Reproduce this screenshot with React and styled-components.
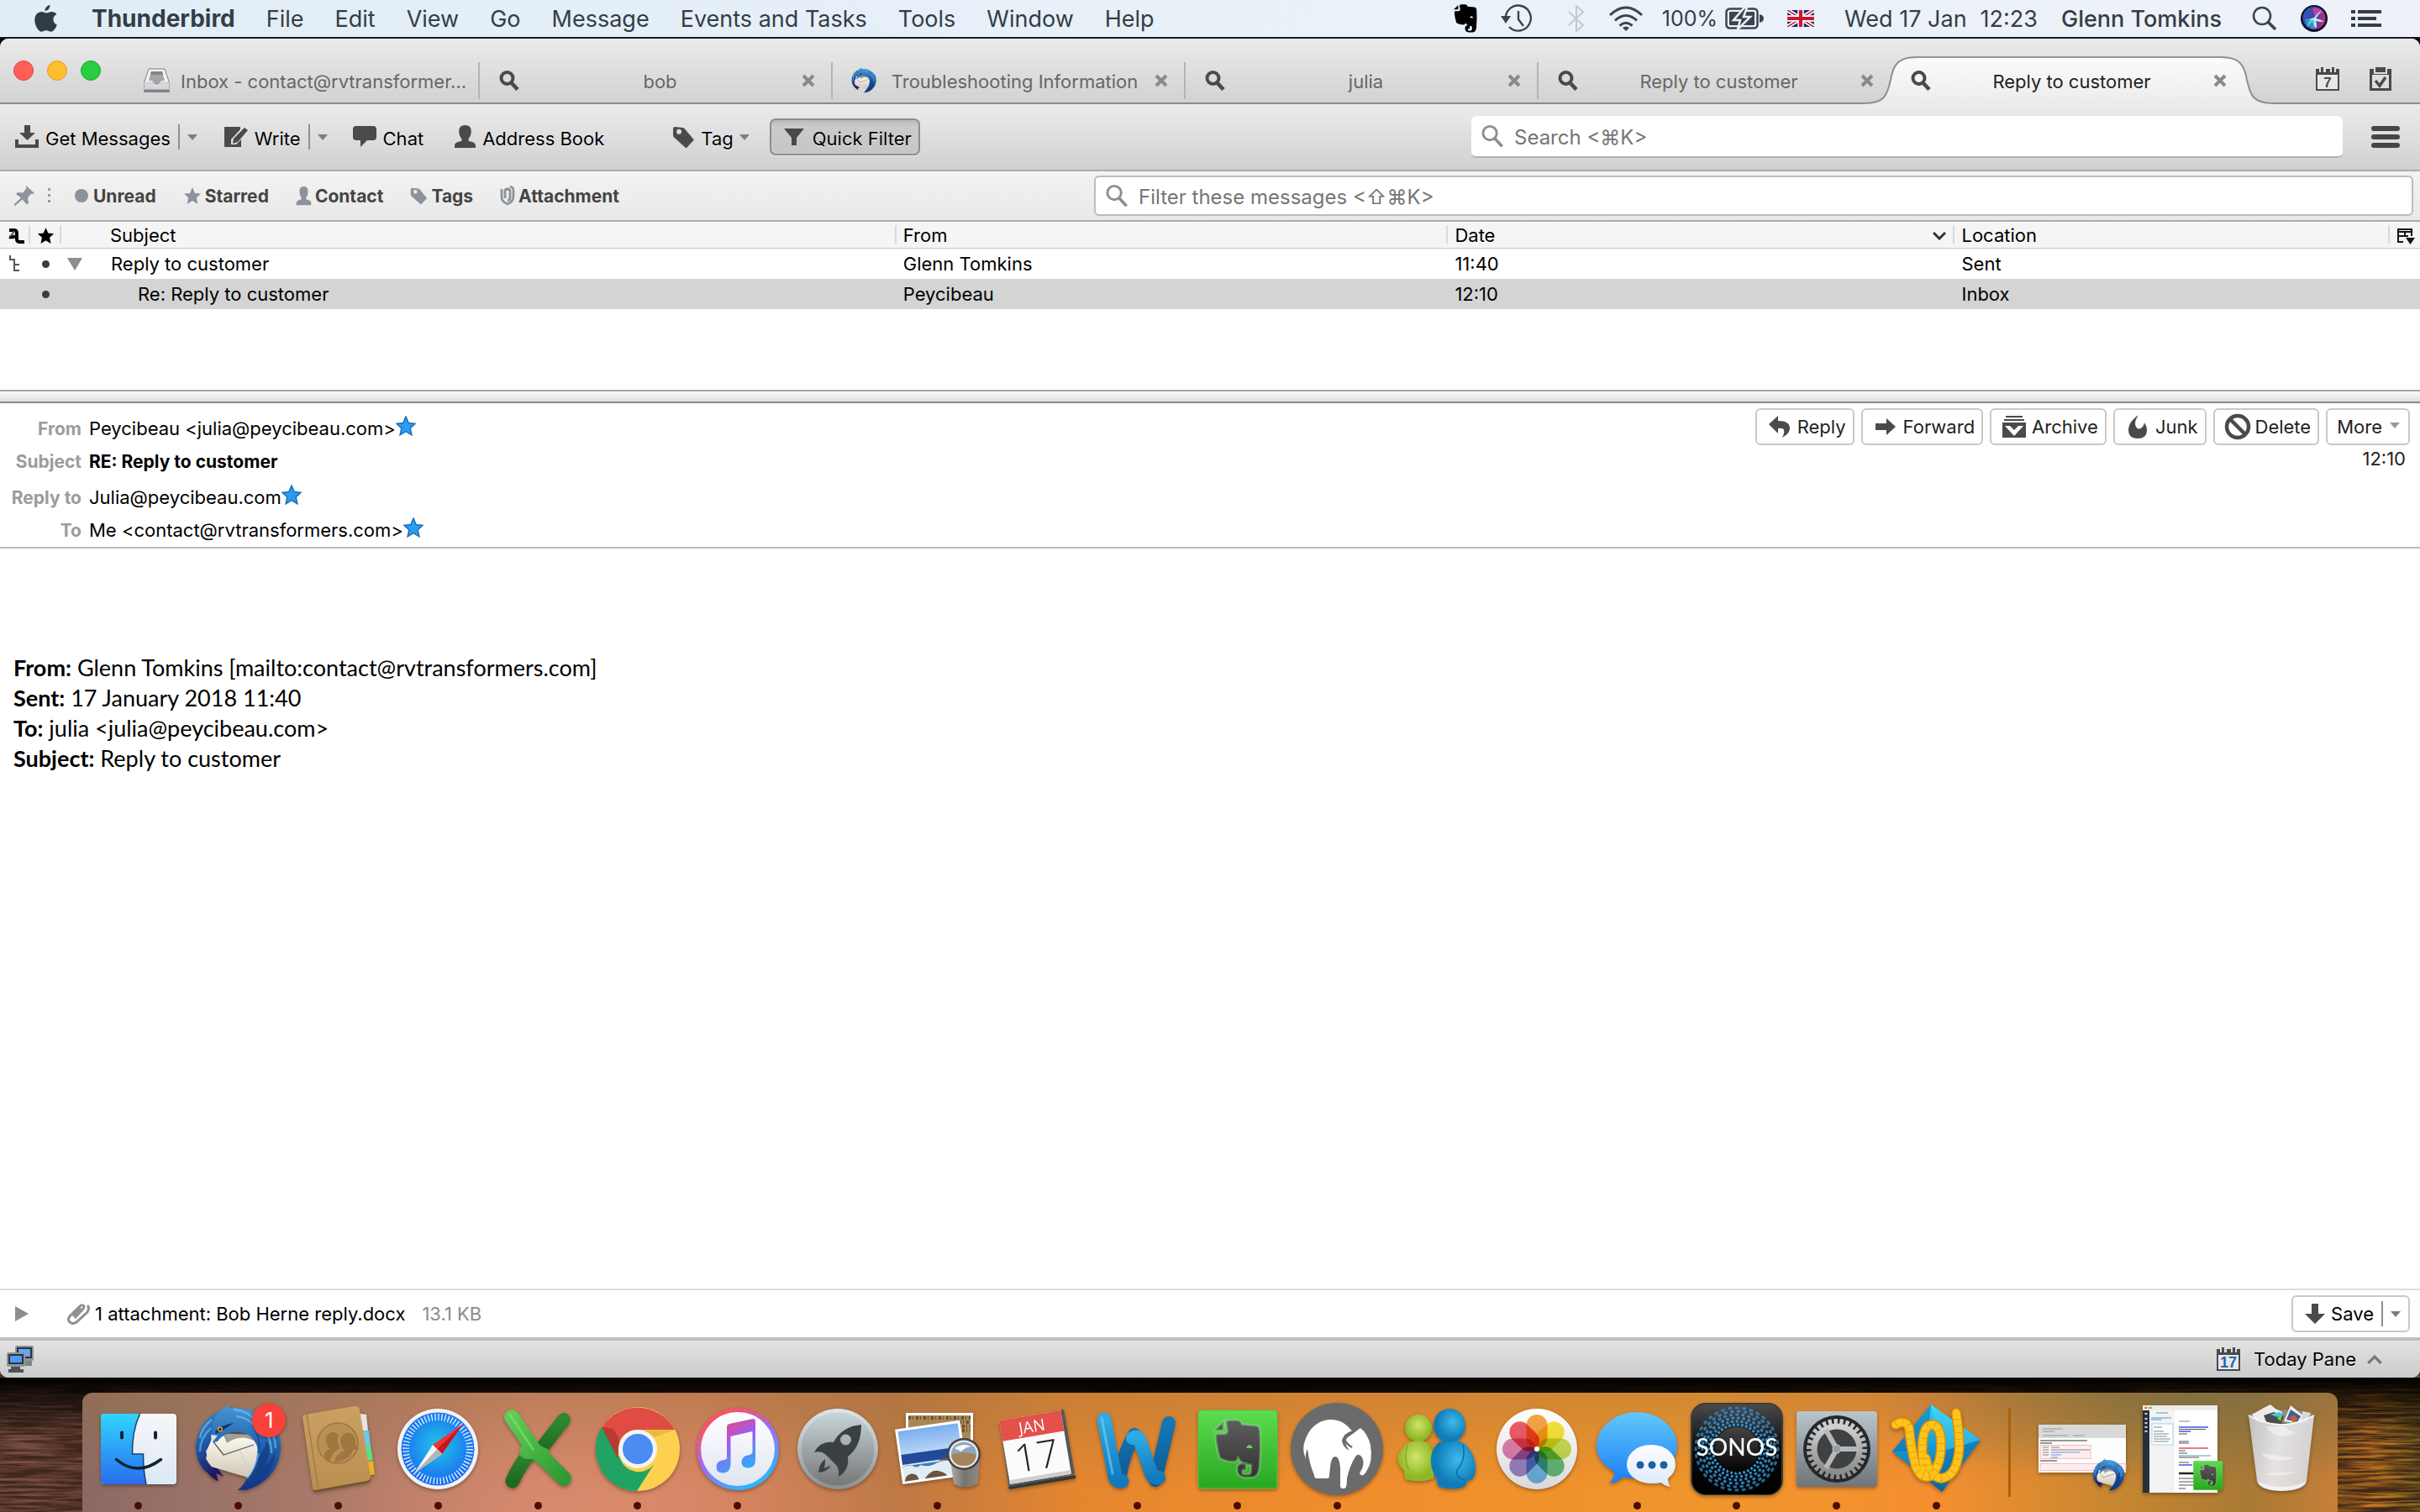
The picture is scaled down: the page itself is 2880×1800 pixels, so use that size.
import React from "react";
import styled, { createGlobalStyle, css } from "styled-components";

const GlobalStyle = createGlobalStyle`
  * { box-sizing: border-box; }
  body {
    margin: 0;
    background: #0b0603;
    color: #000;
    font-family: Inter, "DejaVu Sans", sans-serif;
    font-size: 22px;
  }
  button, input { font: inherit; color: inherit; }
  button { border: 0; padding: 0; background: none; white-space: nowrap; }
  svg { display: block; flex: none; }
`;

const Desktop = styled.div`
  position: relative;
  display: flex;
  flex-direction: column;
  min-height: 100vh;
`;

/* ---------- menu bar ---------- */

const MenuBar = styled.header`
  display: flex;
  justify-content: space-between;
  align-items: center;
  height: 46px;
  padding: 0 46px 0 41px;
  background: linear-gradient(90deg, #e1edf5, #eaf1f9 60%, #eef2f8);
  border-bottom: 2px solid #141c26;
  color: #333d47;
  font-size: 27px;
`;

const MenuList = styled.nav`
  display: flex;
  align-items: center;
  gap: 37px;
`;

const MenuItem = styled.button`
  padding-left: ${(p) => (p.$app ? "4px" : "0")};
  font-size: ${(p) => (p.$app ? "28px" : "27px")};
  font-weight: ${(p) => (p.$app ? 700 : 400)};
`;

const StatusItems = styled.div`
  display: flex;
  align-items: center;
  gap: 28px;
  white-space: nowrap;
`;

const Battery = styled.div`
  display: flex;
  align-items: center;
  gap: 9px;
  margin-left: -6px;
  font-size: 25px;
`;

const Clock = styled.div`
  display: flex;
  gap: 16px;
  margin-left: 8px;
`;

const UserName = styled.span`
  margin-right: 8px;
  font-weight: 500;
`;

/* ---------- window and tabs ---------- */

const Window = styled.main`
  position: relative;
  display: flex;
  flex: 1;
  flex-direction: column;
  border-radius: 10px;
  overflow: hidden;
  background: #fff;
`;

const TabStrip = styled.div`
  display: flex;
  align-items: flex-end;
  height: 78px;
  padding-left: 16px;
  background: linear-gradient(#ebebeb, #d2d2d2);
  border-bottom: 2px solid #8b8b8b;
`;

const WindowButtons = styled.div`
  display: flex;
  align-self: flex-start;
  gap: 16px;
  width: 135px;
  padding-top: 26px;
`;

const WindowButton = styled.button`
  width: 24px;
  height: 24px;
  border-radius: 50%;
  border: 1px solid ${(p) => p.$edge};
  background: ${(p) => p.$fill};
`;

const Tab = styled.div`
  position: relative;
  display: flex;
  align-items: center;
  flex: 0 1 420px;
  min-width: 0;
  height: 52px;
  padding: ${(p) => (p.$first ? "0 6px 0 20px" : "0 20px 0 23px")};
  color: #666;
  text-shadow: 0 1px 0 #eee;
  ${(p) =>
    p.$divider &&
    css`
      &::after {
        content: "";
        position: absolute;
        right: 0;
        top: 4px;
        width: 2px;
        height: 44px;
        background: #b4b4b4;
      }
    `}
`;

const ActiveTab = styled(Tab)`
  height: 57px;
  margin-bottom: -2px;
  color: #222;
`;

const TabTop = styled.div`
  position: absolute;
  top: 0;
  bottom: 0;
  left: 30px;
  right: 28px;
  border-top: 2px solid #979797;
  background: linear-gradient(#fbfbfb, #ececec);
`;

const TabEdge = styled.svg`
  position: absolute;
  top: 0;
  ${(p) => (p.$side === "left" ? "left: -32px;" : "right: -34px; transform: scaleX(-1);")}
`;

const TabTitle = styled.button`
  position: relative;
  flex: 1;
  min-width: 0;
  overflow: hidden;
  padding-top: 2px;
  text-overflow: ellipsis;
  text-align: ${(p) => (p.$left ? "left" : "center")};
  padding-left: ${(p) => (p.$left ? "14px" : "0")};
`;

const IconSlot = styled.span`
  position: relative;
  display: flex;
  justify-content: ${(p) => (p.$end ? "flex-end" : "center")};
  flex: none;
  width: ${(p) => p.$w}px;
`;

const TabTools = styled.div`
  display: flex;
  align-items: center;
  gap: 36px;
  height: 56px;
  margin-left: auto;
  padding-right: 34px;
`;

/* ---------- toolbars ---------- */

const Toolbar = styled.div`
  display: flex;
  align-items: center;
  height: 80px;
  padding: 0 24px 0 17px;
  background: linear-gradient(#ececec, #d0d0d0);
  border-bottom: 2px solid #acacac;
`;

const ToolButton = styled.button`
  display: flex;
  align-items: center;
  gap: 7px;
  height: 44px;
  margin-right: ${(p) => p.$after || 0}px;
  text-shadow: 0 1px 0 #f4f4f4;
  span { padding-top: 3px; }
`;

const ToggleButton = styled(ToolButton)`
  gap: 10px;
  padding: 0 8px 0 15px;
  border: 2px solid #8d8d8d;
  border-radius: 7px;
  background: linear-gradient(#b9b9b9, #cbcbcb 20%, #c6c6c6);
  box-shadow: 0 1px 0 #eee;
`;

const DropButton = styled.button`
  display: flex;
  align-items: center;
  justify-content: center;
  width: 32px;
  height: 30px;
  border-left: 2px solid #8f8f8f;
  margin: 0 ${(p) => p.$after}px 0 9px;
`;

const SearchBox = styled.label`
  display: flex;
  align-items: center;
  gap: 12px;
  flex: 0 1 ${(p) => p.$basis};
  height: ${(p) => (p.$outlined ? "48px" : "50px")};
  margin-left: auto;
  padding: 0 12px 0 11px;
  background: #fff;
  border-radius: 6px;
  ${(p) =>
    p.$outlined
      ? css`border: 2px solid #bcbcbc;`
      : css`border-bottom: 2px solid #b0b0b0;`}
  input {
    flex: 1;
    min-width: 0;
    height: 42px;
    padding: 2px 0 0;
    border: 0;
    outline: 0;
    background: transparent;
    font-size: 24px;
  }
  input::placeholder { color: #757575; opacity: 1; }
`;

const MenuButton = styled.button`
  display: flex;
  flex-direction: column;
  gap: 4px;
  width: 34px;
  margin-left: 34px;
  i {
    height: 6px;
    border-radius: 3px;
    background: #464646;
  }
`;

const FilterBar = styled.div`
  display: flex;
  align-items: center;
  height: 60px;
  padding: 0 8px 0 16px;
  background: linear-gradient(#f3f3f3, #e8e8e8);
  border-bottom: 2px solid #acacac;
`;

const FilterButton = styled.button`
  display: flex;
  align-items: center;
  gap: 4px;
  margin-right: 32px;
  color: #444;
  font-size: 21px;
  font-weight: 700;
`;

const Dots = styled.i`
  width: 3px;
  height: 18px;
  margin: 0 28px 0 15px;
  background: repeating-linear-gradient(#999 0 3px, transparent 3px 7px);
`;

/* ---------- message list ---------- */

const ThreadPane = styled.section`
  height: 200px;
`;

const ThreadTable = styled.table`
  width: 100%;
  table-layout: fixed;
  border-collapse: separate;
  border-spacing: 0;
  text-align: left;
`;

const HeadCell = styled.th`
  position: relative;
  height: 32px;
  padding: 2px 0 0 ${(p) => p.$pad ?? 8}px;
  background: #f5f5f5;
  border-bottom: 1px solid #c4c4c4;
  font-weight: 400;
  line-height: 29px;
  &:not(:last-child)::after {
    content: "";
    position: absolute;
    right: 0;
    top: 4px;
    width: 2px;
    height: 22px;
    background: #d9d9d9;
  }
`;

const HeadLabel = styled.span`
  display: flex;
  justify-content: ${(p) => (p.$center ? "center" : "space-between")};
  align-items: center;
  padding-right: ${(p) => (p.$center ? 0 : 10)}px;
`;

const Row = styled.tr`
  height: 36px;
  background: ${(p) => (p.$selected ? "#d4d4d4" : "#fff")};
`;

const Cell = styled.td`
  height: 36px;
  padding: 0 0 0 ${(p) => p.$pad ?? 8}px;
  line-height: 36px;
  white-space: nowrap;
`;

const SubjectCell = styled.span`
  display: flex;
  align-items: center;
  gap: 34px;
`;

const ReadDot = styled.i`
  display: block;
  width: 9px;
  height: 9px;
  margin: 0 auto;
  border-radius: 50%;
  background: #3c3c3c;
`;

const Splitter = styled.div`
  height: 16px;
  background: linear-gradient(#fafafa, #dedede);
  border-top: 2px solid #a6a6a6;
  border-bottom: 2px solid #8b8b8b;
`;

/* ---------- message ---------- */

const MessageHeader = styled.section`
  display: flex;
  justify-content: space-between;
  border-bottom: 2px solid #bcbcbc;
`;

const Fields = styled.dl`
  margin: 0;
  padding-top: 11px;
`;

const Field = styled.div`
  display: flex;
  height: 39px;
  margin-top: ${(p) => (p.$spaced ? 4 : 0)}px;
  line-height: 39px;
  dt {
    width: 97px;
    color: #9c9c9c;
    font-size: 21px;
    font-weight: 700;
    text-align: right;
  }
  dd {
    display: flex;
    margin: 0 0 0 9px;
    font-size: ${(p) => (p.$strong ? 21 : 22)}px;
    font-weight: ${(p) => (p.$strong ? 700 : 400)};
  }
  svg { margin-top: 4px; }
`;

const HeaderSide = styled.div`
  color: #222;
  text-align: right;
`;

const HeaderButtons = styled.div`
  display: flex;
  gap: 8px;
  padding: 6px 12px 0 0;
`;

const BoxButton = styled.button`
  display: flex;
  align-items: center;
  height: 44px;
  padding: 0 8px 0 ${(p) => p.$pad ?? 6}px;
  border: 2px solid #c9c9c9;
  border-radius: 6px;
  background: #fff;
`;

const MoreArrow = styled.span`
  padding: 0 2px 4px 9px;
`;

const MessageTime = styled.div`
  padding-right: 17px;
  line-height: 32px;
`;

const MessageBody = styled.article`
  flex: 1;
  padding: 124px 16px 0;
  font-family: Lato, "Liberation Sans", sans-serif;
  font-size: 27px;
  line-height: 36px;
  p { margin: 0; }
`;

const AttachmentBar = styled.section`
  display: flex;
  align-items: center;
  height: 58px;
  padding: 0 12px 0 18px;
  border-top: 2px solid #dedede;
`;

const AttachmentText = styled.span`
  margin-left: 6px;
`;

const AttachmentSize = styled.span`
  margin-left: 20px;
  color: #8b8b85;
`;

const ClipSlot = styled.span`
  margin-left: 45px;
`;

const SaveGroup = styled.div`
  display: flex;
  align-items: center;
  height: 44px;
  margin-left: auto;
  padding: 0 0 0 14px;
  border: 2px solid #c9c9c9;
  border-radius: 6px;
`;

const StatusBar = styled.footer`
  display: flex;
  justify-content: space-between;
  align-items: center;
  height: 48px;
  padding: 0 45px 0 8px;
  border-top: 4px solid #bfbfbf;
  background: linear-gradient(#e2e2e2, #cbcbcb);
`;

const TodayButton = styled(ToolButton)`
  gap: 13px;
  span { padding: 0; }
  svg:first-child { margin-right: 3px; }
`;

/* ---------- dock ---------- */

const Wallpaper = styled.svg`
  position: absolute;
  left: 0;
  bottom: 0;
  width: 100%;
  height: 220px;
`;

const DockArea = styled.div`
  position: relative;
  height: 160px;
  padding: 18px 98px 0;
  background: linear-gradient(#000 0, #000000b0 20px, transparent 70px);
`;

const DockShelf = styled.nav`
  display: flex;
  height: 142px;
  padding: 0 7px;
  border-radius: 12px 12px 0 0;
  background:
    radial-gradient(340px 150px at 24% 100%, #e0907399, transparent),
    radial-gradient(380px 110px at 93% 0, #786b42cc, transparent),
    linear-gradient(#9c744060, transparent 80%),
    linear-gradient(90deg, #8b6a64, #a8796a 10%, #cf8468 20%, #cf7f58 28%, #bd7844 36%, #e5862f 44%, #f08d2c 56%, #f0962b 72%, #f58f30 82%, #c98730 90%, #a97a35 96%, #c67f38);
`;

const DockItem = styled.button`
  position: relative;
  display: flex;
  flex-direction: column;
  align-items: center;
  flex: 1;
  padding-top: 12px;
  &::after {
    content: "";
    display: ${(p) => (p.$running ? "block" : "none")};
    width: 9px;
    height: 9px;
    margin-top: 8px;
    border-radius: 50%;
    background: #4c0d00;
  }
  svg { overflow: visible; filter: drop-shadow(0 2px 2px #0005); }
`;

const DockDivider = styled.i`
  width: 54px;
  margin: 18px 0;
  background: linear-gradient(#a8620f, #a8620f) center / 3px 100% no-repeat;
`;

const Badge = styled.span`
  position: absolute;
  top: 13px;
  left: calc(50% + 17px);
  width: 40px;
  height: 40px;
  border-radius: 50%;
  background: #fa4038;
  box-shadow: 0 1px 4px #0006;
  color: #fff;
  font-size: 26px;
  line-height: 40px;
`;

/* ---------- small icons ---------- */

const DARK = "#4a4a4a";
const STAR = "M11 0l3.2 7.6 7.8.8-5.8 5.3 1.7 8.1L11 17.6l-6.9 4.2 1.7-8.1L0 8.4l7.8-.8z";
const EVERNOTE =
  "M28 33l11-11v9q0 2-2 2zM42 24q0-3 4-3.500h10q4 .5 5 5l16 1.500q5 .5 5.500 6 1.500 20-.5 44-1 11-9 12h-9q-9-1-9-10 0-7 6-7h5v8h-2.500q-2 0-2 2.500t3 2.500h4q3 0 3-5v-6q-11 0-15-8-1 4-5 4.500-8 0-17-4.500-4-14-5-26 0-3 3-3h7q4 0 4-4z";

const Apple = () => (
  <svg width="27" height="32" viewBox="0 0 27 32" fill="#313b46">
    <path d="M18.500 0c.3 3.500-2.700 7-6 6.900C12.200 3.600 15.200.5 18.500 0zM22.400 17c0-3.200 2-4.900 4-6-1.500-2.200-3.900-3-5.800-3-2.700 0-4.500 1.600-6.200 1.600S10.800 8.100 8.400 8.100C4.200 8.100.3 11.600.3 18c0 6.600 4.600 13.800 8 13.800 2 0 3.200-1.500 5.700-1.500s3.400 1.500 5.600 1.500c3.200 0 6-4.800 7.200-8.300-2.600-1-4.400-3.300-4.400-6.500z" />
  </svg>
);

const Elephant = ({ w = 29, h = 34 }) => (
  <svg width={w} height={h} viewBox="26 20 58 70" preserveAspectRatio="none">
    <path d={EVERNOTE} fill="#000" />
    <path d="M66 53q4-8 9 1z" fill="#eaf1f9" />
  </svg>
);

const TimeMachine = () => (
  <svg width="38" height="34" viewBox="0 0 38 34" fill="none" stroke="#3b444e" strokeWidth="2.400">
    <path d="M6 19A15 15 0 1 1 10 27" />
    <path d="M21 8v10l6 8" />
    <path d="M0 14h12l-6 9z" fill="#3b444e" stroke="none" />
  </svg>
);

const Bluetooth = () => (
  <svg width="20" height="32" viewBox="0 0 20 32" fill="none" stroke="#c3c9d1" strokeWidth="2">
    <path d="M1 8l17 16-8 7V1l8 7L1 24" />
  </svg>
);

const Wifi = () => (
  <svg width="42" height="30" viewBox="0 0 42 30" fill="none" stroke="#3b444e" strokeWidth="3">
    <path d="M2 11q19-18 38 0M8 17.500q13-12 26 0M13.500 23.500q7.500-6.500 15 0" />
    <path d="M17 26q4-3 8 0l-4 4z" fill="#3b444e" stroke="none" />
  </svg>
);

const BatteryIcon = () => (
  <svg width="46" height="26" viewBox="0 0 46 26">
    <rect x="1.500" y="1.500" width="37" height="23" rx="4" fill="none" stroke="#3b444e" strokeWidth="2.500" />
    <rect x="5" y="5" width="30" height="16" rx="1" fill="#3b444e" />
    <path d="M41 8q5 1 5 5t-5 5z" fill="#3b444e" />
    <path d="M23 0L10 15h8l-3 11L30 11h-8l4-11z" fill="#3b444e" stroke="#eaf1f9" strokeWidth="2.500" />
  </svg>
);

const Flag = () => (
  <svg width="32" height="20" viewBox="0 0 60 38">
    <rect width="60" height="38" fill="#1d2a78" />
    <path d="M0 0l60 38M60 0L0 38" stroke="#fff" strokeWidth="9" />
    <path d="M0 0l60 38M60 0L0 38" stroke="#cc1430" strokeWidth="3" />
    <path d="M30 0v38M0 19h60" stroke="#fff" strokeWidth="14" />
    <path d="M30 0v38M0 19h60" stroke="#cc1430" strokeWidth="8" />
  </svg>
);

const Spotlight = () => (
  <svg width="30" height="30" viewBox="0 0 30 30" fill="none" stroke="#3b444e" strokeWidth="2.600">
    <circle cx="12" cy="12" r="10" />
    <path d="M19 19l9 9" strokeWidth="3.500" />
  </svg>
);

const Siri = () => (
  <svg width="32" height="32" viewBox="0 0 32 32">
    <defs>
      <linearGradient id="siri" x1="0" y1="0.300" x2="1" y2="0.700">
        <stop offset="0" stopColor="#1f5fc0" />
        <stop offset="0.500" stopColor="#4c3f9c" />
        <stop offset="0.900" stopColor="#b02f86" />
      </linearGradient>
    </defs>
    <circle cx="16" cy="16" r="16" fill="#10102c" />
    <circle cx="16" cy="15.500" r="13.500" fill="url(#siri)" />
    <path d="M14 4q8-3 13 6-6 0-10 4z" fill="#d445a8" opacity=".8" />
    <path d="M4 18q10-2 12-3 5-6 9-9-4 6-7 10 6 1 10 4-6 0-10-1 2 6 0 9-3-3-4-9-3 4-7 7 2-5 5-9-4 1-8 1z" fill="#b4f4fb" />
    <path d="M5 19q4 9 11 10 1-7 0-12z" fill="#20c6d8" opacity=".6" />
  </svg>
);

const ListIcon = () => (
  <svg width="36" height="20" viewBox="0 0 36 20" fill="#333d47">
    <path d="M0 0h5v4H0zM8 0h28v4H8zM0 8h5v4H0zM8 8h22v4H8zM0 16h5v4H0zM8 16h28v4H8z" />
  </svg>
);

const Lens = ({ size = 24, color = DARK, w = 4 }) => (
  <svg width={size} height={size} viewBox="0 0 24 24" fill="none" stroke={color} strokeWidth={w}>
    <circle cx="9.500" cy="9" r="7" />
    <path d="M14 14l8 8.500" strokeWidth={w + 0.6} />
  </svg>
);

const Inbox = () => (
  <svg width="31" height="30" viewBox="0 0 31 30">
    <path d="M6 1h19l5 15v9H1v-9z" fill="#f3f3f5" stroke="#7d7d7d" />
    <path d="M9 4h13l3 11h-4q-2 5-5.500 5T10 15H6z" fill="#a6a6a6" />
    <path d="M9 4h13l1 4H8z" fill="#858585" />
    <path d="M1 16h9q2 5 5.500 5t5.500-5h9v9H1z" fill="#d6d7de" />
    <path d="M0 26h31v3H0z" fill="#848484" />
  </svg>
);

const Cross = () => (
  <svg width="16" height="16" viewBox="0 0 16 16" stroke="#8a8a8a" strokeWidth="4">
    <path d="M2 2l12 12M14 2L2 14" />
  </svg>
);

const CalendarIcon = ({ day, color = DARK, size = 17 }) => (
  <svg width="28" height="28" viewBox="0 0 28 28">
    <path d="M0 2h4v4h2V0h3v6h3V2h5v4h2V0h3v6h2V2h4v26H0z" fill={DARK} />
    <path d="M2 9h24v17H2z" fill="#e8e8e8" />
    <text x="14" y="24" textAnchor="middle" fontFamily="Liberation Sans, sans-serif" fontWeight="700" fontSize={size} fill={color}>{day}</text>
  </svg>
);

const TasksIcon = () => (
  <svg width="26" height="28" viewBox="0 0 26 28">
    <path d="M0 2h5v6h16V2h5v26H0z" fill={DARK} />
    <path d="M7 0h12v6H7z" fill={DARK} />
    <path d="M3 9h20v16H3z" fill="#dedede" />
    <path d="M7 16l5 6 7-10" fill="none" stroke={DARK} strokeWidth="3.500" />
  </svg>
);

const Arrow = ({ color = "#7d7d7d" }) => (
  <svg width="12" height="7" viewBox="0 0 12 7"><path d="M0 0h12L6 7z" fill={color} /></svg>
);

const GetMail = () => (
  <svg width="30" height="28" viewBox="0 0 30 28" fill={DARK}>
    <path d="M12 0h7v9h6l-9.500 9L6 9h6z" />
    <path d="M1 17h4v6h20v-6h4v10H1z" />
  </svg>
);

const WriteIcon = () => (
  <svg width="30" height="26" viewBox="0 0 30 26" fill={DARK}>
    <path d="M1 1h19v3L9 16v6h6l6-6v9H1z" />
    <path d="M25 2l4 3-12 14-6 2 1-6z" />
  </svg>
);

const ChatIcon = () => (
  <svg width="30" height="28" viewBox="0 0 30 28" fill={DARK}>
    <path d="M5 1h20q4 0 4 4v9q0 4-4 4h-7l-8 8v-8H5q-4 0-4-4V5q0-4 4-4z" />
  </svg>
);

const Person = ({ w = 26, h = 28, color = DARK }) => (
  <svg width={w} height={h} viewBox="0 0 26 28" fill={color} preserveAspectRatio="none">
    <path d="M13 0q7 0 7 7 0 6-3 9v3q8 1 8 5v3H1v-3q0-4 8-5v-3Q6 13 6 7q0-7 7-7z" />
  </svg>
);

const TagIcon = ({ w = 26, color = DARK }) => (
  <svg width={w} height={w} viewBox="0 0 26 26">
    <path fillRule="evenodd" d="M1 3q0-2 2-2l9 1q2 0 3 2l10 12-9 9.500L2 13Q1 12 1 10zM5 6.500a2.800 2.800 0 1 0 5.600 0 2.800 2.800 0 1 0-5.600 0z" fill={color} />
  </svg>
);

const Funnel = () => (
  <svg width="24" height="22" viewBox="0 0 24 22"><path d="M0 1h24l-9 11v9h-6v-9z" fill={DARK} /></svg>
);

const Pin = () => (
  <svg width="26" height="26" viewBox="0 0 26 26" fill="#8c939c">
    <path d="M15 1l10 9-3 1-1-.5-4 5 1 6-2 2-5.500-6L2 25H1v-2l8-7.500L3 11l2-2 6 .5 4.500-5L15 3z" />
  </svg>
);

const Clip = () => (
  <svg width="18" height="24" viewBox="0 0 18 24" fill="none" stroke="#8c939c" strokeWidth="2.800">
    <path d="M6 15V7q0-3 3-3t3 3v7q0 3-3 4M2 4v10q0 5 7 8 7-3 7-9V6q0-4-4-5" />
  </svg>
);

const Star = ({ size = 22, fill = "#8c939c", stroke }) => (
  <svg width={size} height={size} viewBox="-1 -1 24 24"><path d={STAR} fill={fill} stroke={stroke} strokeWidth="1.500" /></svg>
);

const ThreadHead = () => (
  <svg width="20" height="20" viewBox="0 0 20 20" fill="none" stroke="#000" strokeWidth="4">
    <path d="M1 3h6q3 0 3 4v7q0 3 4 3h5M1 11q4 1 7-1" />
    <path d="M2 11l5-7" stroke="#555" strokeWidth="2" />
  </svg>
);

const ThreadMark = () => (
  <svg width="12" height="20" viewBox="0 0 12 20" fill="none" stroke="#555" strokeWidth="2">
    <path d="M1 0v5h5v13h6M6 11h6" />
  </svg>
);

const Picker = () => (
  <svg width="22" height="20" viewBox="0 0 22 20">
    <path d="M8 17H2V2h16v8M2 5h16M10 4v6M2 10h12" fill="none" stroke="#111" strokeWidth="2" />
    <path d="M11 12h11l-5.500 8z" fill="#111" />
  </svg>
);

const ReplyIcon = () => (
  <svg width="26" height="26" viewBox="0 0 26 26" fill={DARK}><path d="M0 10L11 0v6q14 0 14 9 0 6-9 11 3-5 2-9-1-3-7-2v6z" /></svg>
);
const ForwardIcon = () => (
  <svg width="24" height="20" viewBox="0 0 24 20" fill={DARK}><path d="M0 6h13V0l11 10-11 10v-6H0z" /></svg>
);
const ArchiveIcon = () => (
  <svg width="28" height="26" viewBox="0 0 28 26">
    <path d="M4 0h20v2H4zM2 4h24v2H2zM0 8h28v18H0z" fill={DARK} />
    <path d="M3 12h6l5 5 5-5h6L14 24z" fill="#fff" />
  </svg>
);
const JunkIcon = () => (
  <svg width="22" height="28" viewBox="0 0 22 28" fill={DARK}><path d="M12 0Q6 9 9 14q3 5 8 0 2-3 2-5 3 5 3 9 0 10-11 10T0 18Q0 8 12 0z" /></svg>
);
const DeleteIcon = () => (
  <svg width="32" height="32" viewBox="0 0 32 32" fill="none" stroke={DARK} strokeWidth="4.500">
    <circle cx="16" cy="16" r="13" />
    <path d="M7 7l18 18" />
  </svg>
);
const SaveIcon = () => (
  <svg width="24" height="24" viewBox="0 0 24 24" fill={DARK}><path d="M8 0h8v12h8L12 24 0 12h8z" /></svg>
);

const PaperClip = () => (
  <svg width="28" height="26" viewBox="0 0 28 26" fill="none" stroke="#8f8f8f" strokeWidth="3">
    <path d="M10 18L20 7q2-3 0-4t-4 1L4 16q-3 4 0 7t8 0L25 11q3-5 0-8" />
    <path d="M8 16l9-10" />
  </svg>
);

const Computers = () => (
  <svg width="34" height="34" viewBox="0 0 34 34">
    <rect x="10" y="1" width="22" height="18" rx="2" fill="#8c9699" />
    <rect x="12" y="3" width="18" height="13" fill="#2c3338" />
    <rect x="14" y="5" width="14" height="9" fill="#62a6f8" />
    <path d="M20 19h10v6h-8z" fill="#7b8588" />
    <rect x="0" y="9" width="22" height="17" rx="2" fill="#8c9699" />
    <rect x="2" y="11" width="18" height="12" fill="#2c3338" />
    <rect x="4" y="13" width="14" height="8" fill="#4c9af8" />
    <path d="M5 26h11v3h4v4H2v-4h3z" fill="#4b5356" />
  </svg>
);

const Chevron = ({ up, w = 16, color = "#333" }) => (
  <svg width={w} height={w / 2 + 2} viewBox="0 0 16 10" fill="none" stroke={color} strokeWidth="3">
    <path d={up ? "M1 9l7-7 7 7" : "M1 1l7 7 7-7"} />
  </svg>
);

/* ---------- dock icons ---------- */

const Art = ({ children, size = 110 }) => (
  <svg width={size} height={size} viewBox="0 0 110 110">{children}</svg>
);

const Grad = ({ id, from, to, mid, x2 = 0, y2 = 1 }) => (
  <linearGradient id={id} x1="0" y1="0" x2={x2} y2={y2}>
    <stop offset="0" stopColor={from} />
    {mid && <stop offset=".5" stopColor={mid} />}
    <stop offset="1" stopColor={to} />
  </linearGradient>
);

const Finder = () => (
  <Art>
    <defs>
      <Grad id="fL" from="#2fd6ff" to="#2a6cee" />
      <Grad id="fR" from="#f8f6f8" to="#dbe8f6" />
    </defs>
    <rect x="11" y="13" width="90" height="84" rx="4" fill="url(#fR)" />
    <path d="M15 13h42.500Q48 34 48.500 61h13q0 20 3.500 36H15q-4 0-4-4V17q0-4 4-4z" fill="url(#fL)" />
    <path d="M57.500 13Q48 34 48.500 61h13q0 20 3.500 36" fill="none" stroke="#17406b" strokeWidth="1.500" />
    <path d="M36 35.500v6M76 35.500v6" stroke="#10222f" strokeWidth="4" strokeLinecap="round" />
    <path d="M29.500 67.500q25 21 53 0" fill="none" stroke="#10222f" strokeWidth="3.500" strokeLinecap="round" />
  </Art>
);

const BirdShapes = () => (
  <>
    <defs>
      <Grad id="bird" from="#3f97d6" mid="#1d59a8" to="#1c1560" x2={0.3} />
      <Grad id="wing" from="#4799d4" mid="#1f62b0" to="#12357e" />
      <Grad id="mail" from="#fffdf6" to="#cfc5b5" />
    </defs>
    <path d="M14 74q6 14 17 19l-4-11 11 6-9-13z" fill="#241363" />
    <path d="M20 36l54 2 12 24-15 28L13 73z" fill="url(#mail)" />
    <path d="M36 34q16-6 36 0l4 12q-18-10-34 2z" fill="#4a4640" opacity=".5" />
    <path d="M21 40l17 22 36-12" fill="none" stroke="#5d564c" strokeWidth="1.300" />
    <path d="M57 56l16 32" stroke="#d5cbb9" strokeWidth="1" />
    <path d="M32 10Q6 24 5 54q1 16 10 26l17 14-3-10 10 3Q22 78 17 66q2-4 0-8 6-10 10-26z" fill="url(#bird)" />
    <path d="M24 44Q22 22 33 10q6-4 12-9l-1 5q26-2 40 10 23 14 22 38-2 29-27 44-10 6-24 6 7-6 11-14 10-10 12-28 3-12-8-22-10-7-22-5-13 4-17 11l-6 1z" fill="url(#wing)" />
    <path d="M76 34q9 13 3 29 8-6 10-18 8 12-2 30 9-6 12-18 2 16-15 34-11 11-22 14 13-15 17-34 4-18-3-37z" fill="#143b86" opacity=".75" />
    <path d="M50 8q18 2 26 13M53 16q15 2 20 10M83 28q12 12 12 32M90 28q10 12 10 26M10 42q2-12 14-22M10 58q0-16 13-28M80 60q-4 16-14 30" fill="none" stroke="#8ed0f2" strokeWidth="2.500" opacity=".5" />
    <path d="M28 34q8-8 22-10-12 9-21 13z" fill="#12336f" />
    <circle cx="34" cy="31.500" r="3" fill="#f29a22" />
    <circle cx="34" cy="31.500" r="1.500" fill="#111" />
    <path d="M23 38l8 1-7 9z" fill="#dfe3e8" />
  </>
);

const Bird = ({ size }) => <Art size={size}><BirdShapes /></Art>;

const Contacts = () => (
  <Art>
    <defs><Grad id="book" from="#cba163" to="#b98e50" /></defs>
    <path d="M81 13l8 1 2 19-8 1z" fill="#e4e4e4" />
    <path d="M84 34l8-1 2 18-8 2z" fill="#6cc9e8" />
    <path d="M86 52l8-1 3 17-9 2z" fill="#5dde84" />
    <path d="M88 70l9-1 2 16-8 2z" fill="#f0ae22" />
    <path d="M27 106l63-11q5-2 4-7l-66 12z" fill="#6f5126" />
    <path d="M13 17q0-3 3-3l58-10q6-1 7 4l13 80q0 4-4 5l-62 11q-3 0-3-3z" fill="url(#book)" />
    <path d="M18 13l14 91" stroke="#a57c3f" strokeWidth="1.500" />
    <circle cx="55" cy="48" r="24" fill="#b88f54" stroke="#9d7640" strokeWidth="1.500" />
    <path d="M39 62q0-5 7-7-6-6-5-13 2-7 9-7 5 1 6 4-3 8 2 15-10 4-13 17-5-4-6-9zM51 71q1-10 12-14-7-8-4-16 3-6 10-5 8 2 7 13l4 6-7 1q-3 12-22 15z" fill="#9d7640" />
  </Art>
);

const Safari = () => (
  <Art>
    <defs>
      <radialGradient id="saf" cx=".5" cy=".45">
        <stop offset="0" stopColor="#21c8e6" />
        <stop offset="1" stopColor="#1a6ff2" />
      </radialGradient>
    </defs>
    <circle cx="55" cy="55" r="48" fill="#f2f2f2" />
    <circle cx="55" cy="55" r="43.500" fill="url(#saf)" />
    <circle cx="55" cy="55" r="38" fill="none" stroke="#e6f4ff" strokeWidth="8" strokeDasharray="1.300 2.680" />
    <path d="M85 25L60 61 49 50z" fill="#f5303a" />
    <path d="M85 25L60 61l-5.500-6z" fill="#c8151d" />
    <path d="M27 84l22-34 11 11z" fill="#f6f6f6" />
    <path d="M27 84l27.500-29L60 61z" fill="#b4b4b4" />
  </Art>
);

const Excel = () => (
  <Art>
    <defs>
      <Grad id="xl" from="#5fcb52" to="#2f9a34" x2={1} />
      <Grad id="xd" from="#2e8a2d" to="#1f6a22" />
    </defs>
    <path d="M86 20L58 56" stroke="url(#xd)" strokeWidth="16" strokeLinecap="round" />
    <path d="M25 93Q34 72 48 58" stroke="url(#xd)" strokeWidth="17" strokeLinecap="round" fill="none" />
    <path d="M24 17l27 40q4 5 10 5M42 58h8q6 0 10 6l26 26" stroke="url(#xl)" strokeWidth="18" strokeLinecap="round" fill="none" />
    <path d="M22 14l27 41" stroke="#86e274" strokeWidth="3" strokeLinecap="round" opacity=".6" />
  </Art>
);

const Chrome = () => (
  <Art>
    <circle cx="55" cy="55" r="50" fill="#fdd04f" />
    <path d="M12 30A50 50 0 0 1 99 32H55a23 23 0 0 0-21 13z" fill="#de4c43" />
    <path d="M12 29A50 50 0 0 0 54 105l21-33a23 23 0 0 1-41-6z" fill="#21a363" />
    <path d="M55 32h44l-24 9z" fill="#d9a32c" opacity=".5" />
    <path d="M12 29l19 37 3-20-8-15z" fill="#b73b33" />
    <circle cx="55" cy="55" r="23" fill="#f4f4f4" />
    <circle cx="55" cy="55" r="18" fill="#4a8cf2" />
  </Art>
);

const ITunes = () => (
  <Art>
    <defs>
      <linearGradient id="itr" x1="0" y1="0" x2=".6" y2="1">
        <stop offset="0" stopColor="#ff4f5e" />
        <stop offset=".25" stopColor="#f2556e" />
        <stop offset=".55" stopColor="#a36af0" />
        <stop offset="1" stopColor="#2bb6ff" />
      </linearGradient>
      <Grad id="itb" from="#ffffff" to="#dfe5f0" />
      <Grad id="itn" from="#fb4757" mid="#a259f2" to="#3aa5f8" x2={0.4} />
    </defs>
    <circle cx="55" cy="55" r="49" fill="url(#itr)" />
    <circle cx="55" cy="55" r="44" fill="url(#itb)" />
    <path d="M42 29q0-3 3-4l28-6q3 0 3 3v46q0 9-8 9.500T59.500 71q0-7 7-8.500 6-1 6-4V34l-26 6v33q0 10-9 10.500-8 0-8-7 0-7 7-8t5.500-4z" fill="url(#itn)" />
  </Art>
);

const Launchpad = () => (
  <Art>
    <defs>
      <Grad id="lpa" from="#dbe7ea" to="#8b8f90" />
      <Grad id="lpb" from="#c8d6da" to="#777" />
    </defs>
    <circle cx="55" cy="55" r="48" fill="url(#lpa)" />
    <circle cx="55" cy="55" r="43.500" fill="url(#lpb)" />
    <path fillRule="evenodd" d="M83 26Q60 28 50 47q-16-2-23 12 8-2 13 2l13 13q4 4 3 14 13-8 11-24 16-12 16-38zM58 44a6.500 6.500 0 1 0 13 0 6.500 6.500 0 1 0-13 0z" fill="#3b4044" />
    <path d="M40 67q-7 5-8 16 10-1 15-8-4 1-8 3 1-5 1-11z" fill="#3b4044" />
  </Art>
);

const Preview = () => (
  <Art>
    <defs>
      <Grad id="sky" from="#7aaef0" to="#bcd7f6" />
      <Grad id="cyl" from="#b4b0aa" mid="#77736f" to="#8f8b87" x2={1} y2={0} />
    </defs>
    <rect x="17" y="12" width="80" height="60" fill="#fff" />
    <rect x="20" y="15" width="74" height="54" fill="#a98754" />
    <path d="M20 18h74M80 23h14M84 28h10M84 33h10" stroke="#6c5230" strokeWidth="4" strokeDasharray="3 2 1 3" />
    <g transform="rotate(-8 47 57)">
      <rect x="8" y="26" width="78" height="66" fill="#fff" />
      <rect x="11" y="29" width="72" height="30" fill="url(#sky)" />
      <rect x="11" y="57" width="72" height="17" fill="#24499a" />
      <rect x="11" y="69" width="72" height="20" fill="#dfeef4" />
      <path d="M11 71q9-2 12 1 6 4 9 0 10 5 20 0 14-3 31 4v-5H11z" fill="#3d7fae" />
      <path d="M11 89q2-8 9-8t8 8zM35 89q9-10 17-7 8 3 10 7zM54 70l8-3 6 4z" fill="#6b5540" />
    </g>
    <path d="M69 61h36l-2 35q-16 9-29 0z" fill="url(#cyl)" />
    <ellipse cx="86" cy="61" rx="20" ry="19" fill="#434343" />
    <ellipse cx="86" cy="61" rx="17.500" ry="16.500" fill="#e4e8ea" />
    <ellipse cx="86" cy="61" rx="15" ry="14" fill="#8ea6bd" />
    <path d="M71 62q15-6 30 0-2 13-15 13T71 62z" fill="#a5845a" />
    <path d="M75 54q10-7 20-2-8 1-12 6z" fill="#f4f8fa" />
  </Art>
);

const Calendar = () => (
  <Art>
    <path d="M10 24l76-16 13 77-78 16z" fill="#4f585c" />
    <path d="M20 100l80-14v4l-79 13z" fill="#31383b" />
    <g transform="rotate(-9.500 55 52)">
      <rect x="15" y="14" width="74" height="77" fill="#fbfbfb" />
      <rect x="15" y="14" width="74" height="25" fill="#e4504a" />
      <path d="M15 86h74v5H15z" fill="#cfcfcf" />
      <text x="52" y="34" textAnchor="middle" fontFamily="Open Sans, sans-serif" fontSize="19" fill="#fff">JAN</text>
      <text x="52" y="79" textAnchor="middle" fontFamily="Open Sans, sans-serif" fontWeight="300" fontSize="46" fill="#222">17</text>
    </g>
  </Art>
);

const Word = () => (
  <Art>
    <defs>
      <Grad id="wa" from="#2fa9e4" to="#1279bd" />
      <Grad id="wd" from="#1577b6" to="#0d5a92" />
    </defs>
    <path d="M33 92q4-30 18-54M76 92L92 24" stroke="url(#wd)" strokeWidth="16" strokeLinecap="round" fill="none" />
    <path d="M15 20l13 68q2 6 8 5" stroke="url(#wa)" strokeWidth="17" strokeLinecap="round" fill="none" />
    <path d="M49 42q6-4 9 4l13 38q3 7 9 5" stroke="url(#wa)" strokeWidth="16" strokeLinecap="round" fill="none" />
    <path d="M12 18l13 66" stroke="#7fd0f6" strokeWidth="3" strokeLinecap="round" opacity=".6" />
  </Art>
);

const EvernoteShapes = () => (
  <>
    <defs>
      <Grad id="ev" from="#5ddc51" to="#27a61f" />
      <Grad id="evk" from="#5d5d5d" to="#333" />
    </defs>
    <rect x="9" y="9" width="94" height="93" rx="4" fill="url(#ev)" stroke="#53cf4a" />
    <path d={EVERNOTE} fill="url(#evk)" stroke="#a5f09a" strokeWidth="3" strokeOpacity=".35" />
    <path d="M66 54q4-8 8 0z" fill="#62cf56" />
  </>
);

const Evernote = () => <Art><EvernoteShapes /></Art>;

const Mammoth = () => (
  <Art>
    <circle cx="55" cy="55" r="55" fill="#6b6b6b" />
    <path d="M28 86q-6-14-8-31-3 6-2 12-5-12-1-22 8-23 29-25 17-1 28 15-12 3-13 10 1 8 9 12-8-10-2-16 6-4 15-11 8 6 12 20 3 20-4 30-4 8-7 6-3-1-1-4 6-9 2-17-5-7-9 1-6 10-9 24 0 12-3 12H62q-3 0-3-3V77q-1-13-6-13t-6 13l-1 10q0 3-3 3H31q-3 0-3-4z" fill="#fff" />
    <path d="M75 34q-12 4-11 9 1 5 9 10" fill="none" stroke="#6b6b6b" strokeWidth="2.500" />
  </Art>
);

const Buddies = () => (
  <Art>
    <defs>
      <radialGradient id="bg" cx=".5" cy=".4"><stop offset="0" stopColor="#cfe66a" /><stop offset="1" stopColor="#8fb826" /></radialGradient>
      <radialGradient id="bb" cx=".6" cy=".4"><stop offset="0" stopColor="#3ebaec" /><stop offset="1" stopColor="#0f7cb8" /></radialGradient>
    </defs>
    <path d="M18 50q6-5 15-5t14 5q7 18 4 40-15 6-34 1l-1-10Q0 66 18 50z" fill="url(#bg)" />
    <ellipse cx="33" cy="30" rx="16" ry="16" fill="url(#bg)" />
    <path d="M20 50q-5 20 2 30" fill="none" stroke="#86ad22" strokeWidth="1.500" />
    <path d="M56 48q7-4 15-4t16 4q14 12 14 30 0 14-10 15-1 6-4 7-14 5-29 0-3-2-3-8Q40 66 56 48z" fill="url(#bb)" />
    <ellipse cx="70" cy="27" rx="19" ry="20" fill="url(#bb)" />
    <path d="M86 50q4 18-7 30-2 10 10 12" fill="none" stroke="#0d6ba3" strokeWidth="1.500" />
  </Art>
);

const petals = ["#f79a2c", "#f7e21d", "#c3dc3a", "#55b76c", "#5fb0e6", "#9478c2", "#dd72a8", "#f0484f"];

const Petal = styled.rect`
  mix-blend-mode: multiply;
`;

const Photos = () => (
  <Art>
    <defs><Grad id="ph" from="#ffffff" to="#d9d9d9" /></defs>
    <circle cx="55" cy="55" r="48" fill="url(#ph)" />
    {petals.map((c, i) => (
      <Petal key={c} x="42.500" y="14" width="25" height="40" rx="12.500" fill={c} opacity=".88" transform={`rotate(${i * 45} 55 55)`} />
    ))}
    <circle cx="55" cy="55" r="3" fill="#fff" />
  </Art>
);

const Messages = () => (
  <Art>
    <defs>
      <Grad id="ma" from="#62c8fb" to="#1a7df6" />
      <Grad id="mb" from="#fdfdfe" to="#dceafa" />
    </defs>
    <path d="M55 11q20 0 34 12 14 13 14 28T89 79q-14 11-34 11-10 0-16-2-7 7-17 8 7-7 6-14Q7 70 7 51q0-16 14-28 14-12 34-12z" fill="url(#ma)" />
    <path d="M72 50q13 0 21 7 8 7 8 17 0 9-9 16 0 6 3 10-7-1-11-5-5 1-12 1-13 0-21-7-8-6-8-15 0-10 8-17 8-7 21-7z" fill="url(#mb)" />
    <g fill="#1d5fa8"><circle cx="59" cy="74" r="4.500" /><circle cx="73" cy="74" r="4.500" /><circle cx="87" cy="74" r="4.500" /></g>
  </Art>
);

const Sonos = () => (
  <Art>
    <defs>
      <Grad id="so" from="#4a4a4a" mid="#0a0a0a" to="#000" />
      <Grad id="sc" from="#444" to="#050505" />
    </defs>
    <rect width="110" height="110" rx="18" fill="#3b3b3b" />
    <rect x="2" y="2" width="106" height="107" rx="16" fill="url(#so)" />
    {[29, 33, 37, 41, 45, 49].map((r, i) => (
      <circle key={r} cx="55" cy="55" r={r} fill="none" stroke="#3295d8" strokeWidth="3" opacity={1 - i * 0.06} pathLength="144" strokeDasharray="2.200 1.800" strokeDashoffset={i % 2} />
    ))}
    <circle cx="55" cy="55" r="26" fill="url(#sc)" />
    <text x="55" y="63" textAnchor="middle" fontFamily="Lato, sans-serif" fontSize="28" fontWeight="500" fill="#fff">SONOS</text>
  </Art>
);

const Prefs = () => (
  <Art>
    <defs>
      <Grad id="pr" from="#b9c5cd" to="#6f7478" />
      <Grad id="pg" from="#d0d0d0" to="#8c8c8c" />
    </defs>
    <rect x="7" y="10" width="96" height="90" rx="4" fill="url(#pr)" />
    <circle cx="55" cy="55" r="40" fill="#24282b" />
    <circle cx="55" cy="55" r="33" fill="none" stroke="url(#pg)" strokeWidth="6" pathLength="120" strokeDasharray="2.500 1.500" />
    <circle cx="55" cy="55" r="27" fill="#3e4245" stroke="url(#pg)" strokeWidth="7" />
    <path d="M55 55h26M55 55L42 32.500M55 55L42 77.500" stroke="#b7b7b7" strokeWidth="6" />
    <circle cx="55" cy="55" r="5" fill="#9a9a9a" stroke="#ccc" />
  </Art>
);

const ROPE = "M6 26q12-7 16 4 2 24 8 46 6 16 18 11M48 87Q36 84 38 46q2-20 12-20 10 2 10 24 0 20-8 32M42 66q4 22 18 24 16-2 20-24 4-16-2-54";

const Rope = () => (
  <Art>
    <defs><Grad id="ro" from="#38d2f2" mid="#1596d4" to="#07649f" /></defs>
    <path d="M48 2l59 42-46 62L2 58z" fill="url(#ro)" />
    <path d="M48 2l-5 56L2 58zM107 44L60 58l1 48z" fill="#0c70ac" opacity=".55" />
    <path d="M48 2l12 56 47-14" fill="#55e0f8" opacity=".35" />
    <g fill="none" strokeLinecap="round" strokeLinejoin="round">
      <path d={ROPE} stroke="#d98d08" strokeWidth="12" />
      <path d={ROPE} stroke="#fcc51d" strokeWidth="9" />
      <path d={ROPE} stroke="#e9a20e" strokeWidth="8" strokeDasharray="1 7" strokeLinecap="butt" />
    </g>
  </Art>
);

const MailThumb = () => (
  <Art>
    <rect x="3" y="26" width="104" height="57" fill="#fdfdfd" />
    <rect x="3" y="26" width="104" height="16" fill="#d9d9d9" />
    <path d="M8 31h24M8 34h14M8 39h30M44 39h14" stroke="#999" />
    <path d="M5 45h56M5 48h14M5 69h20" stroke="#777" strokeWidth="1.500" />
    <path d="M5 50.500h60v16H5zM5 72.500h102v8H5z" fill="#fdeeee" stroke="#f4bcbc" />
    <path d="M8 53h7M8 56h7M8 59h7M8 62h7M18 53h10M18 56h46" stroke="#888" />
    <path d="M18 59h34M18 62h12M18 65h8" stroke="#6b8fe6" />
    <g transform="translate(66 66) scale(.37)"><BirdShapes /></g>
  </Art>
);

const NotesThumb = () => (
  <Art>
    <rect x="8" y="3" width="89" height="104" fill="#fff" />
    <rect x="8" y="3" width="89" height="6" fill="#ececec" />
    <g><circle cx="11.500" cy="6" r="1.300" fill="#f44" /><circle cx="14.500" cy="6" r="1.300" fill="#fa3" /><circle cx="17.500" cy="6" r="1.300" fill="#3c4" /></g>
    <rect x="8" y="9" width="8" height="98" fill="#26303a" />
    <path d="M12 12v2M12 18v2M12 23v2M12 28v2M12 33v2" stroke="#cbd3da" strokeWidth="3" />
    <rect x="16" y="9" width="30" height="98" fill="#f3f3f3" />
    <rect x="19" y="25" width="25" height="25" fill="#fff" stroke="#a6d2ee" />
    <path d="M18 18h24M18 20h12M21 34h12" stroke="#4a93dc" />
    <path d="M21 29h10M21 37h18M21 40h16M21 43h20M21 46h18M51 22h13M24 12h14" stroke="#888" />
    <path d="M51 29h35M51 34h14M51 74h16" stroke="#3c55e6" strokeWidth="1.500" />
    <path d="M51 54h35" stroke="#e64a5c" strokeWidth="1.500" />
    <path d="M51 31.500h32M51 37h10M51 46h12M51 48h12M51 57h8M51 60h10M51 65h24M51 71h12M51 90h22M51 94h22M51 98h22M51 102h8" stroke="#555" />
    <path d="M51 63h38" stroke="#4d9db0" />
    <path d="M51 84h22" stroke="#222" strokeWidth="2.500" />
    <g transform="translate(65 66) scale(.37)"><EvernoteShapes /></g>
  </Art>
);

const Trash = () => (
  <Art>
    <defs>
      <Grad id="tr" from="#c9c9cb" mid="#ececee" to="#dcdcde" x2={1} y2={0.2} />
    </defs>
    <ellipse cx="55" cy="16" rx="39" ry="8" fill="#8f8b84" />
    <path d="M20 14l14-8 8-4 6 5 8 4-2 13-28-1z" fill="#eeece8" />
    <path d="M34 15l12-4 12 5-3 9H38z" fill="#4b4d50" />
    <path d="M42 14l10-3 6 3-8 3z" fill="#3fc8e0" />
    <path d="M50 18l6-4-2 8z" fill="#7ed34a" />
    <path d="M58 22L66 3l17 14-4 8z" fill="#f0f0f0" />
    <path d="M61 20l5-12 12 8-4 7z" fill="#3c5f9a" />
    <path d="M64 18l6-4 5 5-5 5z" fill="#c65a36" />
    <path d="M80 10l10 2-4 10-8 2z" fill="#d8d8da" />
    <path d="M16 15q39 22 78 0l-9 78q-2 11-30 12-27-1-29-12z" fill="url(#tr)" fillOpacity=".93" />
    <path d="M16 15q39 22 78 0" fill="none" stroke="#fafafa" strokeWidth="1.500" />
    <path d="M36 28q12 18 38 8-10-2-16-8zM30 60q14 14 40 6M34 84q20 6 40-2" fill="#fff" fillOpacity=".45" />
    <path d="M28 94q27 12 56 0-2 10-29 11-25-1-27-11z" fill="#fff" fillOpacity=".6" />
  </Art>
);

const dockApps = [
  ["Finder", Finder, true],
  ["Thunderbird", Bird, true, "1"],
  ["Contacts", Contacts, true],
  ["Safari", Safari, true],
  ["Excel", Excel, true],
  ["Chrome", Chrome, true],
  ["iTunes", ITunes, true],
  ["Launchpad", Launchpad],
  ["Preview", Preview, true],
  ["Calendar", Calendar],
  ["Word", Word, true],
  ["Evernote", Evernote, true],
  ["MAMP", Mammoth, true],
  ["Messenger", Buddies],
  ["Photos", Photos],
  ["Messages", Messages, true],
  ["Sonos", Sonos, true],
  ["System Preferences", Prefs, true],
  ["Editor", Rope, true],
];

const dockItems = [
  ["Mail window", MailThumb],
  ["Notes window", NotesThumb],
  ["Trash", Trash],
];

const menus = ["File", "Edit", "View", "Go", "Message", "Events and Tasks", "Tools", "Window", "Help"];

const tabs = [
  { title: "bob", icon: <Lens /> },
  { title: "Troubleshooting Information", icon: <Bird size={32} />, wide: true },
  { title: "julia", icon: <Lens /> },
  { title: "Reply to customer", icon: <Lens />, last: true },
];

const filters = [
  ["Unread", <svg width="19" height="18" key="u"><circle cx="9" cy="9" r="8" fill="#8c939c" /></svg>],
  ["Starred", <Star key="s" />],
  ["Contact", <Person w={19} h={23} color="#8c939c" key="c" />],
  ["Tags", <TagIcon w={21} color="#8c939c" key="t" />],
  ["Attachment", <Clip key="a" />],
];

const messages = [
  { subject: "Reply to customer", from: "Glenn Tomkins", date: "11:40", place: "Sent", parent: true },
  { subject: "Re: Reply to customer", from: "Peycibeau", date: "12:10", place: "Inbox", selected: true },
];

const fields = [
  { name: "From", value: "Peycibeau <julia@peycibeau.com>", star: true },
  { name: "Subject", value: "RE: Reply to customer", strong: true },
  { name: "Reply to", value: "Julia@peycibeau.com", star: true, spaced: true },
  { name: "To", value: "Me <contact@rvtransformers.com>", star: true },
];

const actions = [
  ["Reply", <ReplyIcon key="i" />],
  ["Forward", <ForwardIcon key="i" />],
  ["Archive", <ArchiveIcon key="i" />],
  ["Junk", <JunkIcon key="i" />],
  ["Delete", <DeleteIcon key="i" />],
];

const quoted = [
  ["From:", "Glenn Tomkins [mailto:contact@rvtransformers.com]"],
  ["Sent:", "17 January 2018 11:40"],
  ["To:", "julia <julia@peycibeau.com>"],
  ["Subject:", "Reply to customer"],
];

const EdgeShape = ({ side }) => (
  <TabEdge $side={side} width="62" height="57" viewBox="0 0 62 57">
    <defs><Grad id="edge" from="#fbfbfb" to="#ececec" /></defs>
    <path d="M0 56C24 56 27 46 31 28 34 10 40 1 62 1v56H0z" fill="url(#edge)" />
    <path d="M0 56C24 56 27 46 31 28 34 10 40 1 62 1" fill="none" stroke="#8f8f8f" strokeWidth="2" />
  </TabEdge>
);

const CloseButton = () => (
  <IconSlot as="button" $w={18} aria-label="Close tab"><Cross /></IconSlot>
);

const App = () => {
  return (
    <Desktop>
      <GlobalStyle />
      <Wallpaper preserveAspectRatio="none" viewBox="0 0 2880 220">
        <defs>
          <linearGradient id="wall">
            <stop offset="0" stopColor="#7d5048" />
            <stop offset=".1" stopColor="#6a4238" />
            <stop offset=".5" stopColor="#3a200e" />
            <stop offset=".96" stopColor="#8a5a18" />
            <stop offset=".98" stopColor="#d07c20" />
            <stop offset="1" stopColor="#7c6a1a" />
          </linearGradient>
          <filter id="grain" x="0" y="0" width="100%" height="100%">
            <feTurbulence type="fractalNoise" baseFrequency="0.015 0.300" numOctaves="4" seed="4" />
            <feColorMatrix values="0 0 0 0 0.050  0 0 0 0 0.020  0 0 0 0 0.010  2.600 0 0 0 -0.700" />
          </filter>
        </defs>
        <rect width="2880" height="220" fill="url(#wall)" />
        <rect width="2880" height="220" filter="url(#grain)" />
      </Wallpaper>

      <MenuBar>
        <MenuList>
          <Apple />
          <MenuItem $app>Thunderbird</MenuItem>
          {menus.map((m) => <MenuItem key={m}>{m}</MenuItem>)}
        </MenuList>
        <StatusItems>
          <Elephant />
          <TimeMachine />
          <IconSlot $w={34} $end><Bluetooth /></IconSlot>
          <Wifi />
          <Battery>100%<BatteryIcon /></Battery>
          <Flag />
          <Clock><span>Wed 17 Jan</span><span>12:23</span></Clock>
          <UserName>Glenn Tomkins</UserName>
          <Spotlight />
          <Siri />
          <ListIcon />
        </StatusItems>
      </MenuBar>

      <Window>
        <TabStrip>
          <WindowButtons>
            <WindowButton $fill="#ff5f58" $edge="#e0443e" aria-label="Close" />
            <WindowButton $fill="#ffbe2f" $edge="#dea123" aria-label="Minimise" />
            <WindowButton $fill="#29cc42" $edge="#1aab29" aria-label="Zoom" />
          </WindowButtons>
          <Tab $first $divider>
            <IconSlot $w={30}><Inbox /></IconSlot>
            <TabTitle $left>Inbox - contact@rvtransformer...</TabTitle>
          </Tab>
          {tabs.map((t, i) => (
            <Tab key={i} $divider={!t.last}>
              <IconSlot $w={t.wide ? 28 : 24}>{t.icon}</IconSlot>
              <TabTitle>{t.title}</TabTitle>
              <CloseButton />
            </Tab>
          ))}
          <ActiveTab>
            <TabTop />
            <EdgeShape side="left" />
            <EdgeShape side="right" />
            <IconSlot $w={24}><Lens /></IconSlot>
            <TabTitle>Reply to customer</TabTitle>
            <CloseButton />
          </ActiveTab>
          <TabTools>
            <button aria-label="Calendar"><CalendarIcon day="7" /></button>
            <button aria-label="Tasks"><TasksIcon /></button>
          </TabTools>
        </TabStrip>

        <Toolbar>
          <ToolButton><GetMail /><span>Get Messages</span></ToolButton>
          <DropButton $after={22} aria-label="Get messages options"><Arrow /></DropButton>
          <ToolButton><WriteIcon /><span>Write</span></ToolButton>
          <DropButton $after={20} aria-label="Write options"><Arrow /></DropButton>
          <ToolButton $after={36}><ChatIcon /><span>Chat</span></ToolButton>
          <ToolButton $after={81}><Person w={27} /><span>Address Book</span></ToolButton>
          <ToolButton $after={24}><TagIcon w={27} /><span>Tag</span><Arrow /></ToolButton>
          <ToggleButton aria-pressed="true"><Funnel /><span>Quick Filter</span></ToggleButton>
          <SearchBox $basis="1037px">
            <Lens size={28} color="#8e8e8e" w={2.5} />
            <input aria-label="Search" placeholder="Search <⌘K>" />
          </SearchBox>
          <MenuButton aria-label="Menu"><i /><i /><i /></MenuButton>
        </Toolbar>

        <FilterBar>
          <button aria-label="Keep filters"><Pin /></button>
          <Dots />
          {filters.map(([name, icon]) => (
            <FilterButton key={name}>{icon}{name}</FilterButton>
          ))}
          <SearchBox $basis="1570px" $outlined>
            <Lens size={28} color="#8e8e8e" w={2.5} />
            <input aria-label="Filter these messages" placeholder="Filter these messages <⇧⌘K>" />
          </SearchBox>
        </FilterBar>

        <ThreadPane>
          <ThreadTable>
            <colgroup>
              <col width="36" />
              <col width="37" />
              <col />
              <col width="22.800%" />
              <col width="20.940%" />
              <col width="17.970%" />
              <col width="36" />
            </colgroup>
            <thead>
              <tr>
                <HeadCell $pad={3}><HeadLabel $center><ThreadHead /></HeadLabel></HeadCell>
                <HeadCell $pad={0}><HeadLabel $center><Star size={21} fill="#000" /></HeadLabel></HeadCell>
                <HeadCell $pad={58}>Subject</HeadCell>
                <HeadCell>From</HeadCell>
                <HeadCell><HeadLabel>Date<Chevron /></HeadLabel></HeadCell>
                <HeadCell>Location</HeadCell>
                <HeadCell><HeadLabel as="button" aria-label="Columns"><Picker /></HeadLabel></HeadCell>
              </tr>
            </thead>
            <tbody>
              {messages.map((m) => (
                <Row key={m.subject} $selected={m.selected}>
                  <Cell $pad={11}>{m.parent && <ThreadMark />}</Cell>
                  <Cell $pad={0}><ReadDot /></Cell>
                  <Cell $pad={m.parent ? 7 : 91}>
                    <SubjectCell>
                      {m.parent && <svg width="18" height="15"><path d="M0 0h18L9 15z" fill="#8c8c8c" /></svg>}
                      {m.subject}
                    </SubjectCell>
                  </Cell>
                  <Cell>{m.from}</Cell>
                  <Cell>{m.date}</Cell>
                  <Cell>{m.place}</Cell>
                  <Cell />
                </Row>
              ))}
            </tbody>
          </ThreadTable>
        </ThreadPane>
        <Splitter />

        <MessageHeader>
          <Fields>
            {fields.map((f) => (
              <Field key={f.name} $strong={f.strong} $spaced={f.spaced}>
                <dt>{f.name}</dt>
                <dd>{f.value}{f.star && <Star size={24} fill="#2b9df0" stroke="#1d6fb8" />}</dd>
              </Field>
            ))}
          </Fields>
          <HeaderSide>
            <HeaderButtons>
              {actions.map(([name, icon]) => (
                <BoxButton key={name}><IconSlot $w={42}>{icon}</IconSlot>{name}</BoxButton>
              ))}
              <BoxButton $pad={11}>More<MoreArrow><Arrow color="#999" /></MoreArrow></BoxButton>
            </HeaderButtons>
            <MessageTime>12:10</MessageTime>
          </HeaderSide>
        </MessageHeader>

        <MessageBody>
          {quoted.map(([k, v]) => <p key={k}><b>{k}</b> {v}</p>)}
        </MessageBody>

        <AttachmentBar>
          <button aria-label="Show attachments"><svg width="16" height="18"><path d="M0 0l16 9-16 9z" fill="#8c8c8c" /></svg></button>
          <ClipSlot><PaperClip /></ClipSlot>
          <AttachmentText>1 attachment: Bob Herne reply.docx</AttachmentText>
          <AttachmentSize>13.1 KB</AttachmentSize>
          <SaveGroup>
            <ToolButton><SaveIcon />Save</ToolButton>
            <DropButton $after={0} aria-label="Save options"><Arrow /></DropButton>
          </SaveGroup>
        </AttachmentBar>

        <StatusBar>
          <Computers />
          <TodayButton>
            <CalendarIcon day="17" color="#1767b3" size={18} />
            <span>Today Pane</span>
            <Chevron up w={18} color="#777" />
          </TodayButton>
        </StatusBar>
      </Window>

      <DockArea>
        <DockShelf>
          {dockApps.map(([name, Icon, running, badge]) => (
            <DockItem key={name} aria-label={name} $running={running}>
              <Icon />
              {badge && <Badge>{badge}</Badge>}
            </DockItem>
          ))}
          <DockDivider />
          {dockItems.map(([name, Icon]) => (
            <DockItem key={name} aria-label={name}><Icon /></DockItem>
          ))}
        </DockShelf>
      </DockArea>
    </Desktop>
  );
};

export default App;
